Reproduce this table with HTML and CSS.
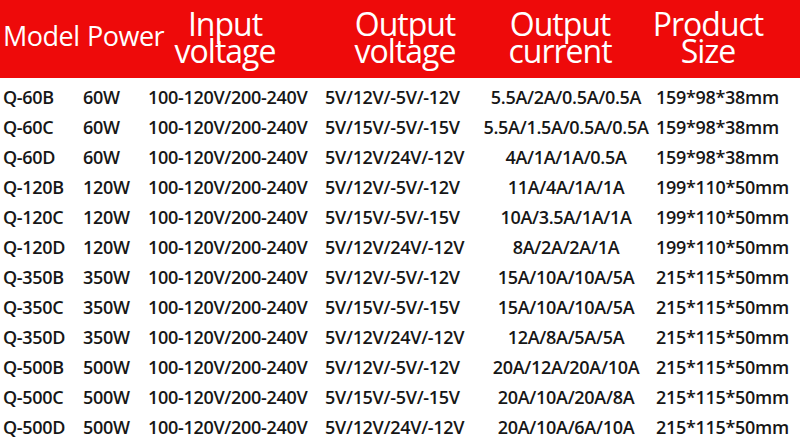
FILE: index.html
```html
<!DOCTYPE html>
<html>
<head>
<meta charset="utf-8">
<link rel="stylesheet" href="styles.css">
</head>
<body>
<div class="sheet">
  <div class="head">
    <div class="hc h-model">Model</div>
    <div class="hc h-power">Power</div>
    <div class="hc two h-in"><span class="ln">Input</span><span class="ln">voltage</span></div>
    <div class="hc two h-ov"><span class="ln">Output</span><span class="ln">voltage</span></div>
    <div class="hc two h-oc"><span class="ln">Output</span><span class="ln">current</span></div>
    <div class="hc two h-sz"><span class="ln">Product</span><span class="ln">Size</span></div>
  </div>
  <div class="rows">
    <div class="row"><span class="c1">Q-60B</span><span class="c2">60W</span><span class="c3">100-120V/200-240V</span><span class="c4">5V/12V/-5V/-12V</span><span class="c5">5.5A/2A/0.5A/0.5A</span><span class="c6">159*98*38mm</span></div>
    <div class="row"><span class="c1">Q-60C</span><span class="c2">60W</span><span class="c3">100-120V/200-240V</span><span class="c4">5V/15V/-5V/-15V</span><span class="c5">5.5A/1.5A/0.5A/0.5A</span><span class="c6">159*98*38mm</span></div>
    <div class="row"><span class="c1">Q-60D</span><span class="c2">60W</span><span class="c3">100-120V/200-240V</span><span class="c4">5V/12V/24V/-12V</span><span class="c5">4A/1A/1A/0.5A</span><span class="c6">159*98*38mm</span></div>
    <div class="row"><span class="c1">Q-120B</span><span class="c2">120W</span><span class="c3">100-120V/200-240V</span><span class="c4">5V/12V/-5V/-12V</span><span class="c5">11A/4A/1A/1A</span><span class="c6">199*110*50mm</span></div>
    <div class="row"><span class="c1">Q-120C</span><span class="c2">120W</span><span class="c3">100-120V/200-240V</span><span class="c4">5V/15V/-5V/-15V</span><span class="c5">10A/3.5A/1A/1A</span><span class="c6">199*110*50mm</span></div>
    <div class="row"><span class="c1">Q-120D</span><span class="c2">120W</span><span class="c3">100-120V/200-240V</span><span class="c4">5V/12V/24V/-12V</span><span class="c5">8A/2A/2A/1A</span><span class="c6">199*110*50mm</span></div>
    <div class="row"><span class="c1">Q-350B</span><span class="c2">350W</span><span class="c3">100-120V/200-240V</span><span class="c4">5V/12V/-5V/-12V</span><span class="c5">15A/10A/10A/5A</span><span class="c6">215*115*50mm</span></div>
    <div class="row"><span class="c1">Q-350C</span><span class="c2">350W</span><span class="c3">100-120V/200-240V</span><span class="c4">5V/15V/-5V/-15V</span><span class="c5">15A/10A/10A/5A</span><span class="c6">215*115*50mm</span></div>
    <div class="row"><span class="c1">Q-350D</span><span class="c2">350W</span><span class="c3">100-120V/200-240V</span><span class="c4">5V/12V/24V/-12V</span><span class="c5">12A/8A/5A/5A</span><span class="c6">215*115*50mm</span></div>
    <div class="row"><span class="c1">Q-500B</span><span class="c2">500W</span><span class="c3">100-120V/200-240V</span><span class="c4">5V/12V/-5V/-12V</span><span class="c5">20A/12A/20A/10A</span><span class="c6">215*115*50mm</span></div>
    <div class="row"><span class="c1">Q-500C</span><span class="c2">500W</span><span class="c3">100-120V/200-240V</span><span class="c4">5V/15V/-5V/-15V</span><span class="c5">20A/10A/20A/8A</span><span class="c6">215*115*50mm</span></div>
    <div class="row"><span class="c1">Q-500D</span><span class="c2">500W</span><span class="c3">100-120V/200-240V</span><span class="c4">5V/12V/24V/-12V</span><span class="c5">20A/10A/6A/10A</span><span class="c6">215*115*50mm</span></div>
  </div>
</div>
</body>
</html>
```

FILE: styles.css
```css
html, body {
  margin: 0;
  padding: 0;
  background: #ffffff;
}
body {
  width: 800px;
  height: 439px;
  overflow: hidden;
  font-family: "Open Sans", "Liberation Sans", sans-serif;
}
.sheet {
  width: 800px;
}
.head {
  height: 78px;
  background: #ee0a0a;
  color: #ffffff;
  display: flex;
  align-items: flex-start;
  padding-top: 10px;
  box-sizing: border-box;
  white-space: nowrap;
}
.hc {
  font-size: 27px;
  line-height: 27px;
  font-weight: 500;
  letter-spacing: -0.5px;
  padding-top: 12px;
}
.hc.two {
  font-size: 32px;
  line-height: 27px;
  letter-spacing: -1px;
  padding-top: 0;
  width: 110px;
  text-align: center;
  display: flex;
  flex-direction: column;
  align-items: center;
}
.ln {
  display: block;
  height: 27px;
}
.h-model {
  width: 81px;
  padding-left: 3px;
}
.h-power {
  width: 86px;
  padding-left: 3px;
}
.h-in {
  margin-left: -3px;
}
.h-ov {
  margin-left: 70px;
}
.h-oc {
  margin-left: 45px;
}
.h-sz {
  margin-left: 38px;
}
.rows {
  padding-top: 4px;
}
.row {
  display: grid;
  grid-template-columns: 80px 65px 177px 158px 172px 148px;
  height: 30px;
  line-height: 30px;
  font-size: 18px;
  font-weight: 600;
  color: #161616;
  white-space: nowrap;
  letter-spacing: -0.3px;
}
.c1, .c2, .c3, .c4 {
  padding-left: 3px;
}
.c5 {
  text-align: center;
}
.c6 {
  padding-left: 4px;
}
```
